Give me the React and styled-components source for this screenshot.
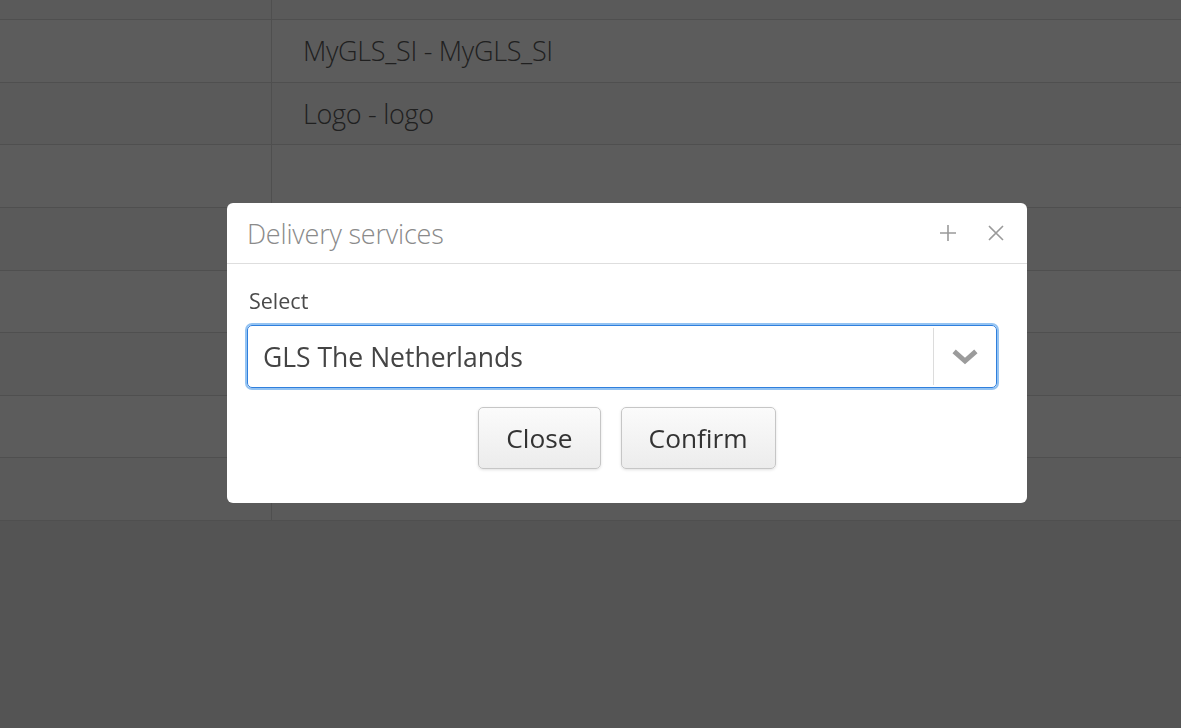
import React from 'react';
import styled, { createGlobalStyle } from 'styled-components';

const GlobalStyle = createGlobalStyle`
  html, body {
    margin: 0;
    padding: 0;
    height: 100%;
    background: #e9e9e9;
    font-family: "Open Sans", "Liberation Sans", sans-serif;
    overflow: hidden;
  }
`

const rowHeight = 62.625;

const Page = styled.div`
  width: 1181px;
  height: 728px;
  overflow: hidden;
  position: relative;
`

const Table = styled.div`
  display: flex;
  flex-direction: column;
  margin-top: ${-(rowHeight - 20)}px;
  background: #fff;
`

const Row = styled.div`
  display: grid;
  grid-template-columns: 272px 1fr;
  height: ${rowHeight}px;
  box-sizing: border-box;
  border-bottom: 1px solid #dadada;
  background: ${({ striped }) => (striped ? '#f8f8f8' : '#ffffff')};
`

const Cell = styled.div`
  display: flex;
  align-items: center;
  padding-left: ${({ first }) => (first ? 0 : 31)}px;
  border-right: ${({ first }) => (first ? '1px solid #dadada' : 'none')};
  font-size: 27px;
  font-weight: 300;
  color: #5a5a5a;
  letter-spacing: -0.3px;
`

const Overlay = styled.div`
  position: fixed;
  inset: 0;
  background: rgba(0, 0, 0, 0.64);
`

const Dialog = styled.div`
  position: absolute;
  left: 227px;
  top: 203px;
  width: 800px;
  background: #fff;
  border-radius: 6px;
  display: flex;
  flex-direction: column;
`

const Header = styled.div`
  height: 61px;
  box-sizing: border-box;
  display: flex;
  align-items: center;
  padding: 0 22px 0 20px;
  border-bottom: 1px solid #dedede;
`

const Title = styled.h2`
  flex: 1;
  margin: 0;
  font-size: 27px;
  font-weight: 300;
  color: #8a8a8a;
  letter-spacing: -0.2px;
`

const HeaderTools = styled.div`
  display: flex;
  align-items: center;
  gap: 30px;
`

const ToolButton = styled.button`
  border: none;
  background: none;
  padding: 0;
  width: 18px;
  height: 18px;
  display: inline-flex;
  color: #9a9a9a;
  cursor: pointer;
  svg { width: 18px; height: 18px; }
`

const Body = styled.div`
  display: flex;
  flex-direction: column;
  padding: 20px 30px 34px 20px;
`

const Label = styled.label`
  font-size: 21.5px;
  color: #4a4a4a;
  line-height: 34px;
  padding-left: 2px;
  margin-bottom: 7px;
`

const SelectBox = styled.div`
  display: flex;
  align-items: stretch;
  height: 63px;
  box-sizing: border-box;
  border: 1px solid #2f7fdd;
  border-radius: 5px;
  box-shadow: 0 0 0 2px #94c3f2;
`

const SelectValue = styled.div`
  flex: 1;
  display: flex;
  align-items: center;
  padding-left: 15px;
  font-size: 26.5px;
  color: #444;
`

const SelectArrow = styled.div`
  width: 62px;
  border-left: 1px solid #dcdcdc;
  margin: 2px 0;
  display: flex;
  align-items: center;
  justify-content: center;
  color: #9b9b9b;
  svg { width: 26px; height: 16px; }
`

const Actions = styled.div`
  display: flex;
  justify-content: center;
  gap: 20px;
  margin-top: 19px;
  padding-left: 10px;
`

const Button = styled.button`
  height: 62px;
  padding: 0 27px;
  font-family: inherit;
  font-size: 26.3px;
  color: #333;
  border: 1px solid #c6c6c6;
  border-radius: 5px;
  background: linear-gradient(#fbfbfb, #ececec);
  box-shadow: 0 1px 3px rgba(0, 0, 0, 0.12);
  cursor: pointer;
`

const rows = [
  '',
  'MyGLS_SI - MyGLS_SI',
  'Logo - logo',
  '', '', '', '', '', '',
];

const PlusIcon = () =>
  <svg viewBox="0 0 18 18" fill="none" stroke="currentColor" strokeWidth="1.6">
    <path d="M9 1v16M1 9h16" />
  </svg>

const CloseIcon = () =>
  <svg viewBox="0 0 18 18" fill="none" stroke="currentColor" strokeWidth="1.6">
    <path d="M2 2l14 14M16 2L2 16" />
  </svg>

const ChevronIcon = () =>
  <svg viewBox="0 0 26 16" fill="none" stroke="currentColor" strokeWidth="5" strokeLinecap="square">
    <path d="M4 4l9 8 9-8" />
  </svg>

const App = () =>
  <Page>
    <GlobalStyle />
    <Table>
      {rows.map((text, i) =>
        <Row key={i} striped={i % 2 === 0}>
          <Cell first />
          <Cell>{text}</Cell>
        </Row>
      )}
    </Table>
    <Overlay />
    <Dialog>
      <Header>
        <Title>Delivery services</Title>
        <HeaderTools>
          <ToolButton><PlusIcon /></ToolButton>
          <ToolButton><CloseIcon /></ToolButton>
        </HeaderTools>
      </Header>
      <Body>
        <Label>Select</Label>
        <SelectBox>
          <SelectValue>GLS The Netherlands</SelectValue>
          <SelectArrow><ChevronIcon /></SelectArrow>
        </SelectBox>
        <Actions>
          <Button>Close</Button>
          <Button>Confirm</Button>
        </Actions>
      </Body>
    </Dialog>
  </Page>

export default App;
